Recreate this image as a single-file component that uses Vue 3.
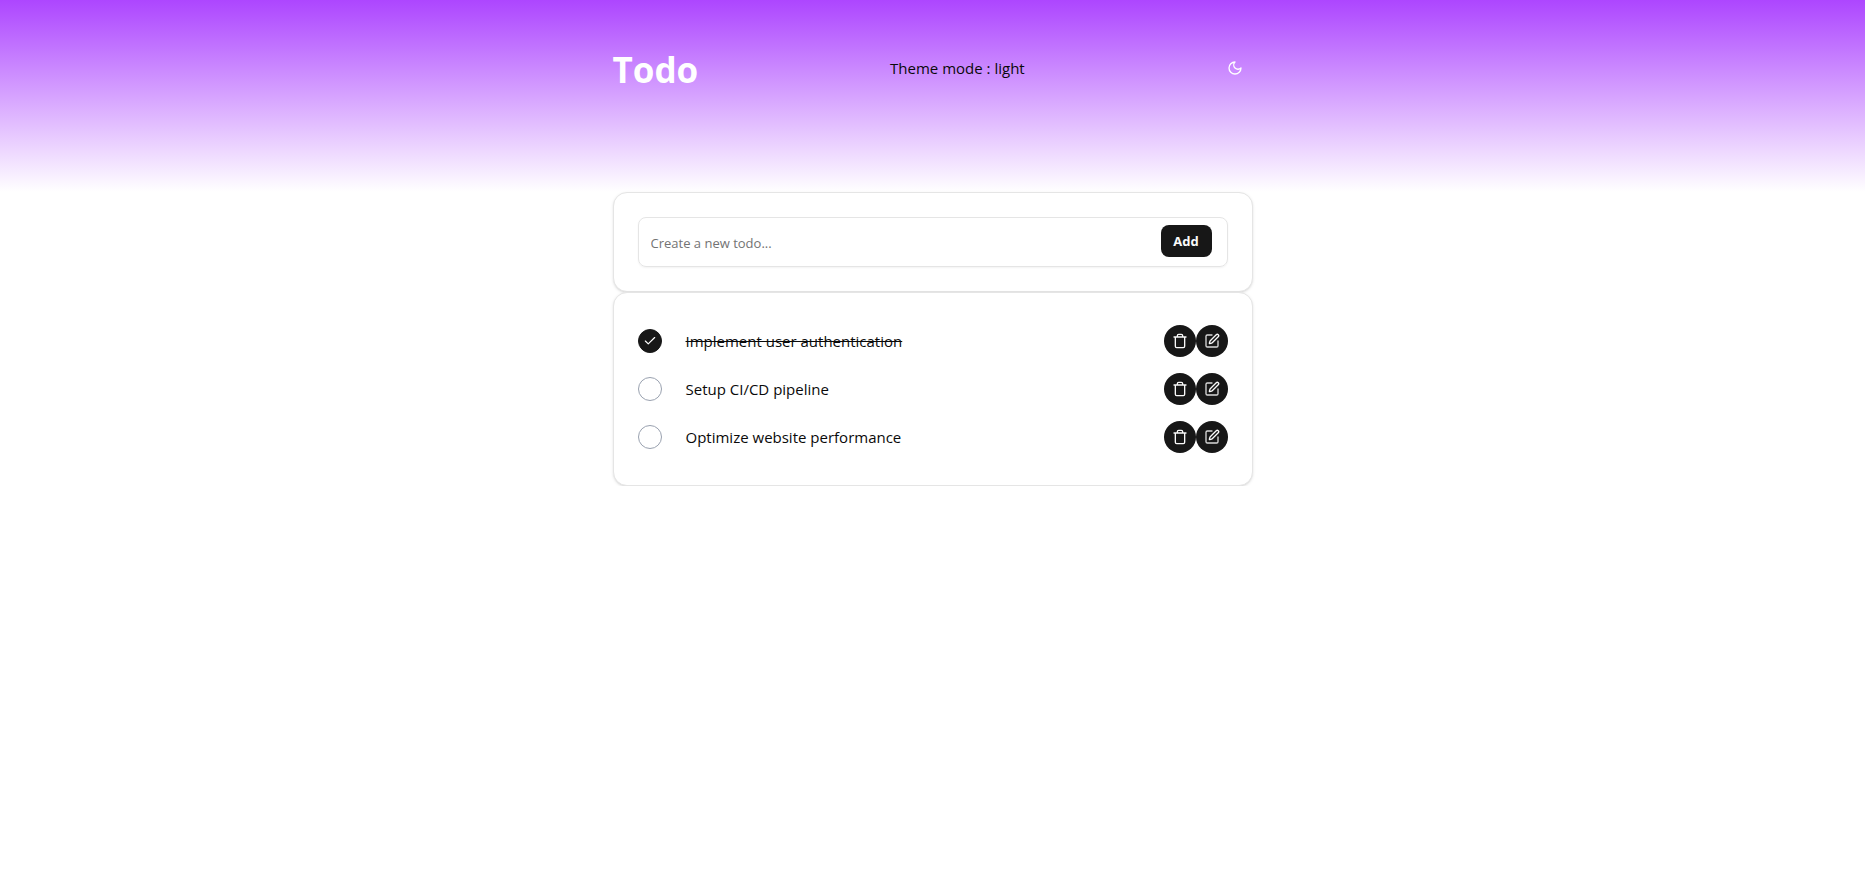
<script setup>
import { ref } from 'vue'

const draft = ref('')
const theme = ref('light')
const todos = ref([
  { id: 1, title: 'Implement user authentication', done: true },
  { id: 2, title: 'Setup CI/CD pipeline', done: false },
  { id: 3, title: 'Optimize website performance', done: false },
])

function add() {
  const title = draft.value.trim()
  if (!title) return
  todos.value.push({ id: Date.now(), title, done: false })
  draft.value = ''
}

function remove(id) {
  todos.value = todos.value.filter((todo) => todo.id !== id)
}
</script>

<template>
  <div class="page">
    <header class="hero">
      <div class="bar">
        <h1>Todo</h1>
        <p>Theme mode : {{ theme }}</p>
        <button class="theme" type="button" aria-label="Toggle theme">
          <svg viewBox="0 0 24 24" width="16" height="16" fill="none" stroke="currentColor" stroke-width="2" stroke-linecap="round" stroke-linejoin="round">
            <path d="M12 3a6 6 0 0 0 9 9 9 9 0 1 1-9-9Z" />
          </svg>
        </button>
      </div>
    </header>

    <main class="content">
      <section class="card">
        <form class="entry" @submit.prevent="add">
          <input v-model="draft" type="text" placeholder="Create a new todo..." aria-label="New todo" />
          <button type="submit">Add</button>
        </form>
      </section>

      <section class="card">
        <ul class="list">
          <li v-for="todo in todos" :key="todo.id">
            <span class="tick">
              <input :id="`todo-${todo.id}`" v-model="todo.done" type="checkbox" />
              <svg v-if="todo.done" viewBox="0 0 24 24" width="14" height="14" fill="none" stroke="currentColor" stroke-width="2" stroke-linecap="round" stroke-linejoin="round">
                <path d="M20 6 9 17l-5-5" />
              </svg>
            </span>
            <label :for="`todo-${todo.id}`" :class="{ done: todo.done }">{{ todo.title }}</label>
            <button class="round" type="button" :aria-label="`Delete ${todo.title}`" @click="remove(todo.id)">
              <svg viewBox="0 0 24 24" width="16" height="16" fill="none" stroke="currentColor" stroke-width="2" stroke-linecap="round" stroke-linejoin="round">
                <path d="M3 6h18M19 6v14a2 2 0 0 1-2 2H7a2 2 0 0 1-2-2V6M8 6V4a2 2 0 0 1 2-2h4a2 2 0 0 1 2 2v2" />
              </svg>
            </button>
            <button class="round" type="button" :aria-label="`Edit ${todo.title}`">
              <svg viewBox="0 0 24 24" width="16" height="16" fill="none" stroke="currentColor" stroke-width="2" stroke-linecap="round" stroke-linejoin="round">
                <path d="M12 3H5a2 2 0 0 0-2 2v14a2 2 0 0 0 2 2h14a2 2 0 0 0 2-2v-7" opacity=".85" />
                <path d="M18.375 2.625a1 1 0 0 1 3 3l-9.013 9.014a2 2 0 0 1-.853.505l-2.873.84a.5.5 0 0 1-.62-.62l.84-2.873a2 2 0 0 1 .506-.852Z" />
              </svg>
            </button>
          </li>
        </ul>
      </section>
    </main>
  </div>
</template>

<style>
body {
  margin: 0;
  background: #fff;
}
</style>

<style scoped>
.page {
  color: #0a0a0a;
  font: 15px/24px 'Segoe UI', 'Open Sans', 'Noto Sans', sans-serif;
}

.page *,
.page *::before {
  box-sizing: border-box;
}

button,
input {
  font: inherit;
}

button {
  padding: 0;
  border: 0;
  cursor: pointer;
}

svg {
  display: block;
}

.hero {
  min-height: 192px;
  padding-top: 48px;
  background: linear-gradient(in oklab to bottom, #ad46ff, transparent);
}

.bar,
.content {
  max-width: 640px;
  margin: 0 auto;
}

.bar {
  display: flex;
  align-items: center;
  justify-content: space-between;
}

h1 {
  height: 40px;
  margin: 0;
  padding-top: 2px;
  color: #fff;
  font-size: 35px;
  line-height: 40px;
  font-weight: 700;
}

p {
  margin: 0;
}

.theme {
  display: grid;
  place-items: center;
  width: 36px;
  height: 36px;
  color: #fff;
  background: transparent;
}

.card {
  padding: 24px;
  border: 1px solid #e5e5e5;
  border-radius: 14px;
  background: #fff;
  box-shadow: 0 1px 3px rgb(0 0 0 / 10%), 0 1px 2px -1px rgb(0 0 0 / 10%);
}

.entry {
  display: flex;
  align-items: flex-start;
  height: 50px;
  padding: 7px 15px 0 0;
  border: 1px solid #e5e5e5;
  border-radius: 8px;
  box-shadow: 0 1px 2px rgb(0 0 0 / 5%);
}

.entry input {
  flex: 1;
  min-width: 0;
  height: 36px;
  padding: 0 12px;
  border: 0;
  outline: 0;
  background: transparent;
  color: inherit;
  font-size: 13px;
}

.entry input::placeholder {
  color: #737373;
}

.entry button {
  width: 51px;
  height: 32px;
  border-radius: 8px;
  background: #171717;
  color: #fafafa;
  font-size: 13px;
  line-height: 20px;
  font-weight: 700;
}

.list {
  margin: 0;
  padding: 0;
  list-style: none;
}

li {
  display: flex;
  align-items: center;
  height: 48px;
}

.tick {
  display: grid;
  place-items: center;
  margin-right: 24px;
  color: #fff;
}

.tick > * {
  grid-area: 1 / 1;
  pointer-events: none;
}

.tick input {
  width: 24px;
  height: 24px;
  margin: 0;
  border: 1px solid #99a1af;
  border-radius: 50%;
  appearance: none;
  pointer-events: auto;
}

.tick input:checked {
  border-color: #171717;
  background: #171717;
}

label {
  flex: 1;
}

.done {
  text-decoration: line-through;
}

.round {
  display: grid;
  place-items: center;
  width: 32px;
  height: 32px;
  border-radius: 50%;
  background: #171717;
  color: #fafafa;
}
</style>
